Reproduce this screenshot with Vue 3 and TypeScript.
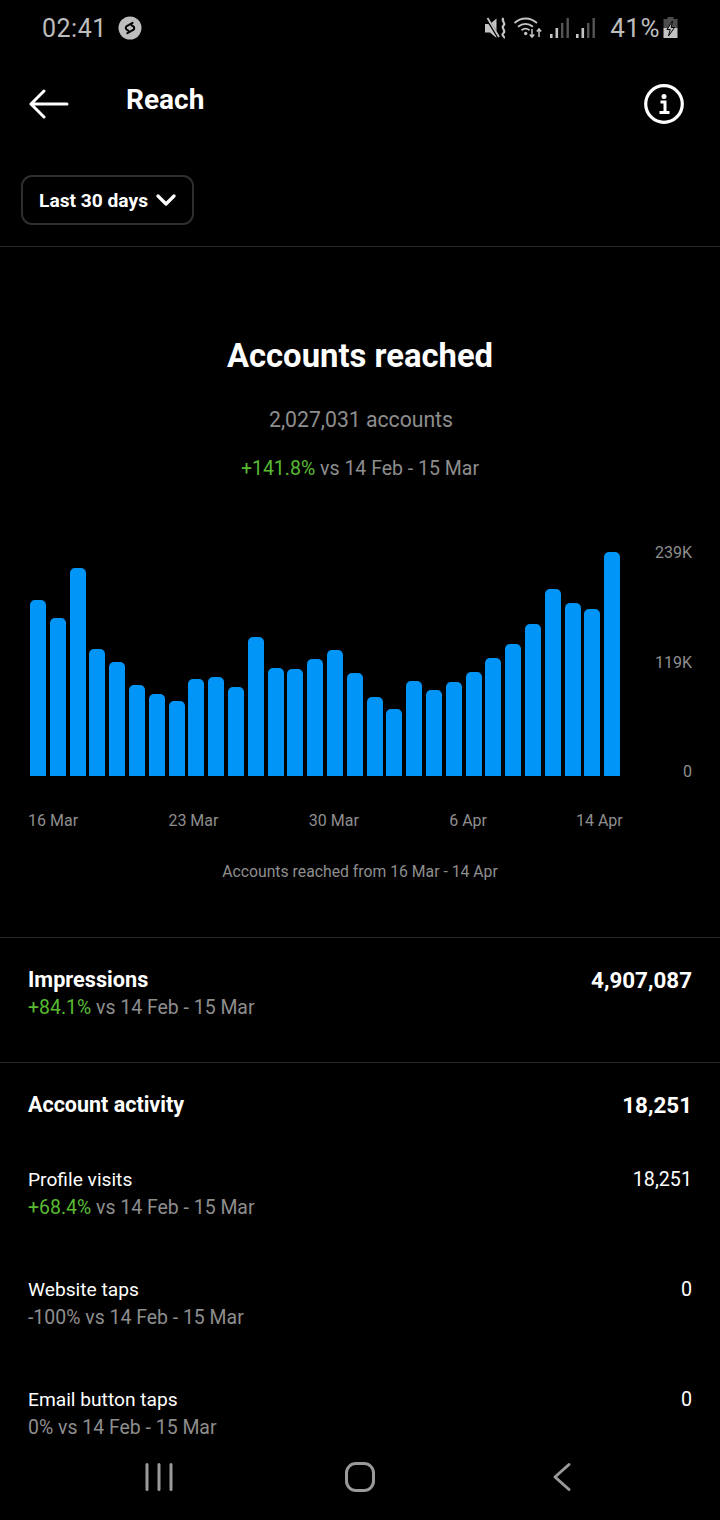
<template>
  <div class="screen">
    <div class="status-bar">
      <div class="status-left">
        <span class="clock">02:41</span>
        <svg class="shazam" width="24" height="24" viewBox="0 0 24 24">
          <circle cx="12" cy="12" r="11.5" fill="#bdbdbd" />
          <path d="M14.6 6.800 8.800 10c-1.500 1-1.300 3 .2 3.800l1.400.8M9.400 17.200l5.800-3.200c1.500-1 1.300-3-.2-3.800l-1.400-.8" fill="none" stroke="#000" stroke-width="2" stroke-linecap="round" />
        </svg>
      </div>
      <div class="status-right">
        <svg width="24" height="24" viewBox="0 0 24 24" class="mute">
          <path d="M1 8h5l6.500-5.500v19.500L6 16.500H1z" fill="#c4c4c4" />
          <path d="M2 1 15 22" stroke="#000" stroke-width="3.200" />
          <path d="M3.500 2 15 21" stroke="#c4c4c4" stroke-width="1.800" />
          <path d="M19.500 2c-3 3 3 5 0 7.500s3 5 0 7.500 2 3.500 0 5" fill="none" stroke="#c4c4c4" stroke-width="2.200" />
        </svg>
        <svg width="30" height="24" viewBox="0 0 30 24" class="wifi">
          <path d="M1.500 7C8 1 17 1 24 7M5 10.800c4.500-3.800 10.500-3.800 15 0M8.500 14.200c2.500-1.900 5.500-1.900 8 0" fill="none" stroke="#c4c4c4" stroke-width="1.800" />
          <circle cx="12.700" cy="17.500" r="1.700" fill="#c4c4c4" />
          <path d="M19 13v8M16.800 18.500l2.200 2.600 2.200-2.600M26 21v-8M23.800 15.600l2.200-2.600 2.200 2.600" fill="none" stroke="#c4c4c4" stroke-width="1.500" />
        </svg>
        <svg v-for="n in 2" :key="n" width="20" height="22" viewBox="0 0 20 22" class="signal">
          <rect x="1" y="17" width="2.600" height="4" fill="#c4c4c4" />
          <rect x="6.500" y="11" width="2.600" height="10" fill="#c4c4c4" />
          <rect x="12" y="6" width="2.400" height="15" fill="#555" />
          <rect x="17.500" y="1" width="2.400" height="20" fill="#555" />
        </svg>
        <span class="battery-text">41%</span>
        <svg width="15" height="22" viewBox="0 0 15 22" class="battery">
          <path d="M4.500 0h6v2H14.500v9H.5V2h4z" fill="#4c4c4c" />
          <path d="M.5 11h14v10H.5z" fill="#c4c4c4" />
          <path d="M9.500 4 4 12.500h3.200L5.500 19l6-8.500H8.200z" fill="#c4c4c4" stroke="#000" stroke-width="1" />
        </svg>
      </div>
    </div>

    <header class="app-header">
      <svg class="back" width="40" height="32" viewBox="0 0 40 32">
        <path d="M38 16H2M15 3 2 16l13 13" fill="none" stroke="#fff" stroke-width="3" stroke-linecap="round" stroke-linejoin="round" />
      </svg>
      <h1>Reach</h1>
      <svg class="info" width="40" height="40" viewBox="0 0 40 40">
        <circle cx="20" cy="20" r="18.300" fill="none" stroke="#fff" stroke-width="3.200" />
        <circle cx="20" cy="12.500" r="2.500" fill="#fff" />
        <path d="M16.500 18H21v10M15.500 28.500h10" fill="none" stroke="#fff" stroke-width="3" />
      </svg>
    </header>

    <div class="filter-row">
      <button class="filter">
        <span>Last 30 days</span>
        <svg width="20" height="12" viewBox="0 0 20 12">
          <path d="M2 2l8 8 8-8" fill="none" stroke="#fff" stroke-width="3.200" stroke-linecap="round" stroke-linejoin="round" />
        </svg>
      </button>
    </div>

    <section class="summary">
      <h2>Accounts reached</h2>
      <p class="total">2,027,031 accounts</p>
      <p class="compare"><span class="up">+141.8%</span> vs 14 Feb - 15 Mar</p>
    </section>

    <div class="chart">
      <div class="bars">
        <div v-for="(h, i) in barHeights" :key="i" class="bar" :style="{ height: h + 'px' }" />
      </div>
      <div class="y-axis">
        <span>239K</span>
        <span>119K</span>
        <span>0</span>
      </div>
    </div>
    <div class="x-axis">
      <span v-for="d in xLabels" :key="d">{{ d }}</span>
    </div>
    <p class="chart-caption">Accounts reached from 16 Mar - 14 Apr</p>

    <section class="impressions">
      <div class="row">
        <span class="strong">Impressions</span>
        <span class="strong num">4,907,087</span>
      </div>
      <p class="sub"><span class="up">+84.1%</span> vs 14 Feb - 15 Mar</p>
    </section>

    <section class="activity">
      <div class="row activity-head">
        <span class="strong head">Account activity</span>
        <span class="strong num">18,251</span>
      </div>
      <div v-for="m in metrics" :key="m.name" class="metric">
        <div class="row">
          <span class="metric-name">{{ m.name }}</span>
          <span class="metric-value">{{ m.value }}</span>
        </div>
        <p class="sub"><span :class="{ up: m.up }">{{ m.change }}</span> vs 14 Feb - 15 Mar</p>
      </div>
    </section>

    <nav class="nav-bar">
      <svg width="28" height="30" viewBox="0 0 28 30">
        <path d="M2 2.500v25M14 2.500v25M26 2.500v25" stroke="#9a9a9a" stroke-width="3" stroke-linecap="round" />
      </svg>
      <svg class="nav-home" width="32" height="32" viewBox="0 0 32 32">
        <rect x="2.500" y="2.500" width="27" height="27" rx="9.500" fill="none" stroke="#9a9a9a" stroke-width="3" />
      </svg>
      <svg class="nav-back" width="20" height="32" viewBox="0 0 20 32">
        <path d="M17 3.500 3 16l14 12.500" fill="none" stroke="#9a9a9a" stroke-width="3" stroke-linecap="round" stroke-linejoin="round" />
      </svg>
    </nav>
  </div>
</template>

<script setup lang="ts">
  const barTops = [
    600, 618, 568, 649, 662, 685, 694, 701, 679, 677, 687, 637, 668, 669, 659,
    650, 673, 697, 709, 681, 690, 682, 672, 658, 644, 624, 589, 603, 609, 552,
  ];
  const barHeights = barTops.map((top) => 776 - top);

  const xLabels = ['16 Mar', '23 Mar', '30 Mar', '6 Apr', '14 Apr'];

  const metrics = [
    { name: 'Profile visits', value: '18,251', change: '+68.4%', up: true },
    { name: 'Website taps', value: '0', change: '-100%', up: false },
    { name: 'Email button taps', value: '0', change: '0%', up: false },
  ];
</script>

<style>
  html,
  body {
    margin: 0;
    background: #000;
  }
</style>

<style scoped>
  .screen {
    position: relative;
    width: 720px;
    height: 1520px;
    overflow: hidden;
    background: #000;
    color: #fff;
    font-family: Roboto, 'Liberation Sans', sans-serif;
  }

  .status-bar {
    display: flex;
    justify-content: space-between;
    align-items: center;
    height: 56px;
    padding: 0 42px;
    color: #bdbdbd;
  }

  .status-left,
  .status-right {
    display: flex;
    align-items: center;
  }

  .clock {
    font-size: 25px;
    letter-spacing: 0.5px;
  }

  .shazam {
    margin-left: 11px;
  }

  .wifi {
    margin-left: 5px;
  }

  .signal {
    margin-left: 6px;
  }

  .battery-text {
    font-size: 26px;
    margin-left: 15px;
    letter-spacing: 0.5px;
  }

  .battery {
    margin-left: 3px;
  }

  .app-header {
    display: flex;
    align-items: center;
    height: 96px;
    padding: 0 36px 0 29px;
  }

  .app-header h1 {
    flex: 1;
    margin: 0 0 10px 57px;
    font-size: 28px;
    font-weight: 700;
  }

  .filter-row {
    height: 95px;
    padding: 23px 0 0 21px;
    box-sizing: border-box;
    border-bottom: 1px solid #262626;
  }

  .filter {
    display: flex;
    align-items: center;
    gap: 8px;
    width: 173px;
    height: 50px;
    padding: 0 0 0 16px;
    background: none;
    border: 2px solid #2e2e2e;
    border-radius: 11px;
    color: #fff;
    font-family: inherit;
    font-size: 19.2px;
    font-weight: 700;
  }

  .summary {
    padding-top: 88px;
    text-align: center;
  }

  .summary h2 {
    margin: 0;
    font-size: 32.8px;
    line-height: 42px;
    font-weight: 700;
  }

  .total {
    margin: 31px 0 0;
    padding-left: 2px;
    font-size: 21.2px;
    line-height: 24px;
    color: #8e8e8e;
  }

  .compare {
    margin: 25px 0 0;
    font-size: 19.5px;
    line-height: 24px;
    color: #8e8e8e;
  }

  .up {
    color: #58bb32;
  }

  .chart {
    display: flex;
    justify-content: space-between;
    margin-top: 63px;
    padding: 0 28px 0 30px;
    height: 240px;
  }

  .bars {
    display: flex;
    align-items: flex-end;
    gap: 3.8px;
    width: 590px;
    height: 232px;
  }

  .bar {
    flex: 1;
    background: #0095f6;
    border-radius: 5px 5px 0 0;
  }

  .y-axis {
    display: flex;
    flex-direction: column;
    justify-content: space-between;
    align-items: flex-end;
    height: 239px;
    margin-top: -1px;
    font-size: 16px;
    line-height: 20px;
    color: #8e8e8e;
  }

  .x-axis {
    display: grid;
    grid-template-columns: repeat(3, 140.4px) 126.8px auto;
    margin-top: 27px;
    padding-left: 28px;
    font-size: 16px;
    line-height: 20px;
    color: #8e8e8e;
  }

  .chart-caption {
    margin: 31px 0 0;
    font-size: 15.77px;
    line-height: 20px;
    text-align: center;
    color: #8e8e8e;
  }

  .impressions {
    margin-top: 55px;
    height: 126px;
    box-sizing: border-box;
    padding: 28px 28px 0;
    border-top: 1px solid #262626;
    border-bottom: 1px solid #262626;
  }

  .row {
    display: flex;
    justify-content: space-between;
  }

  .strong {
    font-size: 21.7px;
    line-height: 28px;
    font-weight: 700;
  }

  .strong.num {
    font-size: 22.4px;
  }

  .strong.head {
    font-size: 21.5px;
  }

  .sub {
    margin: 2px 0 0;
    font-size: 19.45px;
    line-height: 24px;
    color: #8e8e8e;
  }

  .activity {
    padding: 28px 28px 0;
  }

  .activity-head {
    margin-bottom: 47px;
  }

  .metric {
    height: 110px;
  }

  .metric-name {
    font-size: 19.2px;
    line-height: 28px;
  }

  .metric-value {
    font-size: 19.7px;
    line-height: 28px;
  }

  .nav-bar {
    position: absolute;
    left: 0;
    right: 0;
    bottom: 0;
    height: 80px;
    padding: 0 0 6px 145px;
    box-sizing: border-box;
    display: flex;
    align-items: center;
    background: #000;
  }

  .nav-home {
    margin-left: 171px;
  }

  .nav-back {
    margin-left: 176px;
  }
</style>
